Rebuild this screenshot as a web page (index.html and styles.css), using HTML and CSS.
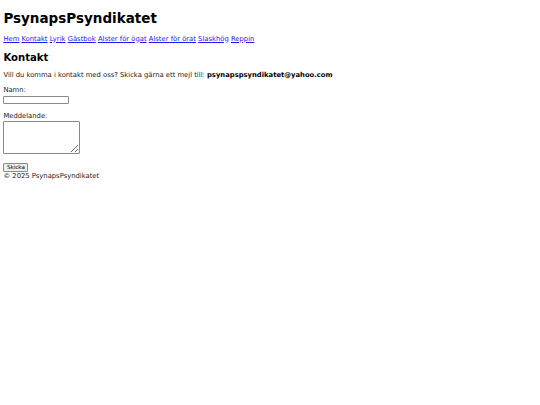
FILE: index.html
```html
<!DOCTYPE html>
<html lang="sv">
<head>
<meta charset="utf-8">
<title>PsynapsPsyndikatet – Kontakt</title>
<link rel="stylesheet" href="styles.css">
</head>
<body class="page">
<header class="site-header">
  <h1 class="site-title">PsynapsPsyndikatet</h1>
  <nav class="site-nav">
    <p class="nav-links">
      <a href="#">Hem</a>
      <a href="#">Kontakt</a>
      <a href="#">Lyrik</a>
      <a href="#">Gästbok</a>
      <a href="#">Alster för ögat</a>
      <a href="#">Alster för örat</a>
      <a href="#">Slaskhög</a>
      <a href="#">Reppin</a>
    </p>
  </nav>
</header>
<main class="content">
  <h2 class="section-title">Kontakt</h2>
  <p class="intro">Vill du komma i kontakt med oss? Skicka gärna ett mejl till: <strong>psynapspsyndikatet@yahoo.com</strong></p>
  <form class="contact-form">
    <label for="namn">Namn:</label><br>
    <input type="text" id="namn" name="namn" class="field-name"><br><br>
    <label for="meddelande">Meddelande:</label><br>
    <textarea id="meddelande" name="meddelande" class="field-message"></textarea><br><br>
    <button type="submit" class="send">Skicka</button>
  </form>
</main>
<footer class="site-footer">&copy; 2025 PsynapsPsyndikatet</footer>
</body>
</html>
```

FILE: styles.css
```css
.page {
  margin: 3.375px;
  font-family: "DejaVu Sans", Verdana, sans-serif;
  font-size: 6.8px;
  line-height: 7.9px;
  color: #1a1a1a;
  background: #fff;
}

.site-title {
  font-size: 13.5px;
  line-height: 15.7px;
  margin: 8px 0 8.5px;
  color: #000;
}

.nav-links {
  margin: 6.75px 0;
}

.nav-links a {
  color: #1a1aee;
}

.section-title {
  font-size: 10.125px;
  line-height: 11.8px;
  margin: 8.4px 0;
  color: #000;
}

.intro {
  margin: 8px 0 6.75px;
}

.intro strong {
  color: #000;
}

.contact-form {
  margin: 0;
}

.field-name,
.field-message {
  font-size: 5.625px;
  border: 1px solid #8a8a8a;
  border-radius: 1px;
  padding: 0;
  box-sizing: border-box;
  vertical-align: baseline;
}

.field-name {
  width: 66px;
  height: 8.4px;
  margin: 1px 0 0.8px;
}

.field-message {
  width: 77px;
  height: 33.5px;
  margin: 0;
  vertical-align: bottom;
}

.send {
  font-family: "DejaVu Sans", Verdana, sans-serif;
  font-size: 5.625px;
  line-height: normal;
  color: #000;
  background: #efefef;
  border: 1px solid #8a8a8a;
  border-radius: 1px;
  padding: 0.4px 2.5px;
  margin: 1px 0 0;
}

.site-footer {
  padding-top: 0.8px;
}
```
